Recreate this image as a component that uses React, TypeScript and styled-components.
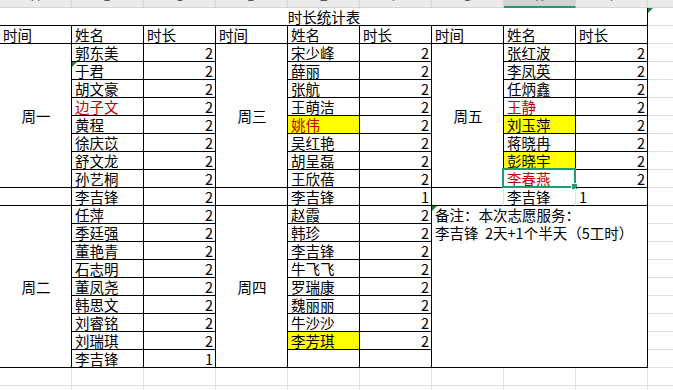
import React from 'react';
import styled, { createGlobalStyle } from 'styled-components';

const COL_W = 72;
const ROW_H = 18;
const BLACK = '#000';
const GRID = '#e1e1e1';
const RED = '#c00000';
const YELLOW = '#ffff00';
const GREEN = '#1f9d6c';
const FLAG = '#1e7b34';

const GlobalStyle = createGlobalStyle`
  html, body {
    margin: 0;
    padding: 0;
    background: #fff;
    overflow: hidden;
  }
  body {
    font-family: 'Noto Sans CJK SC', 'Noto Sans', sans-serif;
  }
`;

const Sheet = styled.div`
  width: ${COL_W * 10}px;
`;

const ColumnBar = styled.div`
  display: grid;
  grid-template-columns: repeat(10, ${COL_W}px);
  grid-template-rows: 8px;
  background: #ebebeb;
`;

const ColumnHead = styled.div<{ $active?: boolean }>`
  box-sizing: border-box;
  display: flex;
  justify-content: center;
  overflow: hidden;
  border-right: 1px solid #d4d4d4;
  border-bottom: ${(p) => (p.$active ? `2px solid ${GREEN}` : '1px solid #d4d4d4')};
  background: ${(p) => (p.$active ? '#d3d3d3' : 'transparent')};
  color: #555;
  font: 12px/12px 'Liberation Sans', sans-serif;
`;

const Letter = styled.span`
  margin-top: -9px;
`;

const Grid = styled.div`
  display: grid;
  grid-template-columns: repeat(10, ${COL_W}px);
  grid-auto-rows: ${ROW_H}px;
`;

interface CellProps {
  $c: number;
  $r: number;
  $cs?: number;
  $rs?: number;
  $right?: string;
  $bottom?: string;
  $ta?: 'left' | 'right' | 'center';
  $fill?: string;
  $ink?: string;
  $flag?: boolean;
}

const justify = { left: 'flex-start', right: 'flex-end', center: 'center' };

const Cell = styled.div<CellProps>`
  position: relative;
  box-sizing: border-box;
  grid-column: ${(p) => p.$c} / span ${(p) => p.$cs ?? 1};
  grid-row: ${(p) => p.$r} / span ${(p) => p.$rs ?? 1};
  display: flex;
  align-items: center;
  justify-content: ${(p) => justify[p.$ta ?? 'left']};
  padding: 0 2px 0 3px;
  border-right: 1px solid ${(p) => p.$right ?? BLACK};
  border-bottom: 1px solid ${(p) => p.$bottom ?? BLACK};
  background: ${(p) => p.$fill ?? 'transparent'};
  color: ${(p) => p.$ink ?? BLACK};
  font-size: 14.5px;
  line-height: 17px;
  white-space: nowrap;

  &::before {
    content: '';
    display: ${(p) => (p.$flag ? 'block' : 'none')};
    position: absolute;
    top: 0;
    left: 0;
    border-top: 5px solid ${FLAG};
    border-right: 5px solid transparent;
  }
`;

const Memo = styled(Cell)`
  display: block;
  line-height: ${ROW_H}px;
  white-space: pre;
`;

const Selection = styled.span`
  position: absolute;
  top: -2px;
  left: -2px;
  right: -1px;
  bottom: -1px;
  border: 2px solid ${GREEN};
  pointer-events: none;

  &::after {
    content: '';
    position: absolute;
    right: -4px;
    bottom: -4px;
    width: 5px;
    height: 5px;
    background: ${GREEN};
    border: 1px solid #fff;
  }
`;

type Mark = 'red' | 'hl' | 'hlred';

interface Entry {
  name: string;
  hours: number | '';
  mark?: Mark;
  flag?: boolean;
  selected?: boolean;
}

const e = (name: string, hours: number | '', mark?: Mark, extra?: Partial<Entry>): Entry => ({
  name,
  hours,
  mark,
  ...extra,
});

interface Section {
  col: number;
  top: string;
  topList: Entry[];
  mid?: Entry;
  bottom?: string;
  bottomList?: Entry[];
}

const SECTIONS: Section[] = [
  {
    col: 1,
    top: '周一',
    topList: [
      e('郭东美', 2),
      e('于君', 2, undefined, { flag: true }),
      e('胡文豪', 2),
      e('边子文', 2, 'red'),
      e('黄程', 2),
      e('徐庆苡', 2),
      e('舒文龙', 2),
      e('孙艺桐', 2),
    ],
    mid: e('李吉锋', 2),
    bottom: '周二',
    bottomList: [
      e('任萍', 2),
      e('季廷强', 2),
      e('董艳青', 2),
      e('石志明', 2),
      e('董凤尧', 2),
      e('韩思文', 2),
      e('刘睿铭', 2),
      e('刘瑞琪', 2),
      e('李吉锋', 1),
    ],
  },
  {
    col: 4,
    top: '周三',
    topList: [
      e('宋少峰', 2),
      e('薛丽', 2),
      e('张航', 2),
      e('王萌洁', 2),
      e('姚伟', 2, 'hlred'),
      e('吴红艳', 2),
      e('胡呈磊', 2),
      e('王欣蓓', 2),
    ],
    mid: e('李吉锋', 1),
    bottom: '周四',
    bottomList: [
      e('赵霞', 2),
      e('韩珍', 2),
      e('李吉锋', 2),
      e('牛飞飞', 2),
      e('罗瑞康', 2),
      e('魏丽丽', 2),
      e('牛沙沙', 2),
      e('李芳琪', 2, 'hl'),
      e('', ''),
    ],
  },
  {
    col: 7,
    top: '周五',
    topList: [
      e('张红波', 2),
      e('李凤英', 2),
      e('任炳鑫', 2),
      e('王静', 2, 'red'),
      e('刘玉萍', 2, 'hl'),
      e('蒋晓冉', 2),
      e('彭晓宇', 2, 'hl'),
      e('李春燕', 2, 'red', { selected: true }),
    ],
  },
];

const LETTERS = ['A', 'B', 'C', 'D', 'E', 'F', 'G', 'H', 'I', 'J'];

function renderEntry(col: number, row: number, item: Entry) {
  const fill = item.mark === 'hl' || item.mark === 'hlred' ? YELLOW : undefined;
  const ink = item.mark === 'red' || item.mark === 'hlred' ? RED : undefined;
  return (
    <React.Fragment key={`${col}-${row}`}>
      <Cell $c={col} $r={row} $fill={fill} $ink={ink} $flag={item.flag}>
        {item.name}
        {item.selected && <Selection />}
      </Cell>
      <Cell $c={col + 1} $r={row} $ta="right">
        {item.hours}
      </Cell>
    </React.Fragment>
  );
}

function SectionBlock({ section }: { section: Section }) {
  const { col } = section;
  return (
    <>
      <Cell $c={col} $r={2}>时间</Cell>
      <Cell $c={col + 1} $r={2}>姓名</Cell>
      <Cell $c={col + 2} $r={2}>时长</Cell>
      <Cell $c={col} $r={3} $rs={8} $ta="center">
        {section.top}
      </Cell>
      {section.topList.map((item, i) => renderEntry(col + 1, 3 + i, item))}
      {section.mid && (
        <>
          <Cell $c={col} $r={11} />
          {renderEntry(col + 1, 11, section.mid)}
        </>
      )}
      {section.bottom && (
        <Cell $c={col} $r={12} $rs={9} $ta="center">
          {section.bottom}
        </Cell>
      )}
      {section.bottomList?.map((item, i) => renderEntry(col + 1, 12 + i, item))}
    </>
  );
}

export default function App() {
  return (
    <Sheet>
      <GlobalStyle />
      <ColumnBar>
        {LETTERS.map((l, i) => (
          <ColumnHead key={l} $active={i === 7}>
            <Letter>{l}</Letter>
          </ColumnHead>
        ))}
      </ColumnBar>
      <Grid>
        <Cell $c={1} $r={1} $cs={9} $ta="center">
          时长统计表
        </Cell>
        {SECTIONS.map((s) => (
          <SectionBlock key={s.col} section={s} />
        ))}

        {/* 周五 extra row, unbordered inside */}
        <Cell $c={7} $r={11} $right={GRID} />
        <Cell $c={8} $r={11} $right={GRID}>
          李吉锋
        </Cell>
        <Cell $c={9} $r={11}>1</Cell>
        <Memo $c={7} $r={12} $cs={3} $rs={9} $flag>
          <div>备注：本次志愿服务：</div>
          <div>{'李吉锋  2天+1个半天（5工时）'}</div>
        </Memo>

        {Array.from({ length: 20 }, (_, i) => (
          <Cell key={`j${i}`} $c={10} $r={i + 1} $right={GRID} $bottom={GRID} $flag={i === 0} />
        ))}
        {[21, 22].map((r) =>
          LETTERS.map((l, i) => (
            <Cell key={`${l}${r}`} $c={i + 1} $r={r} $right={GRID} $bottom={GRID} />
          )),
        )}
      </Grid>
    </Sheet>
  );
}
